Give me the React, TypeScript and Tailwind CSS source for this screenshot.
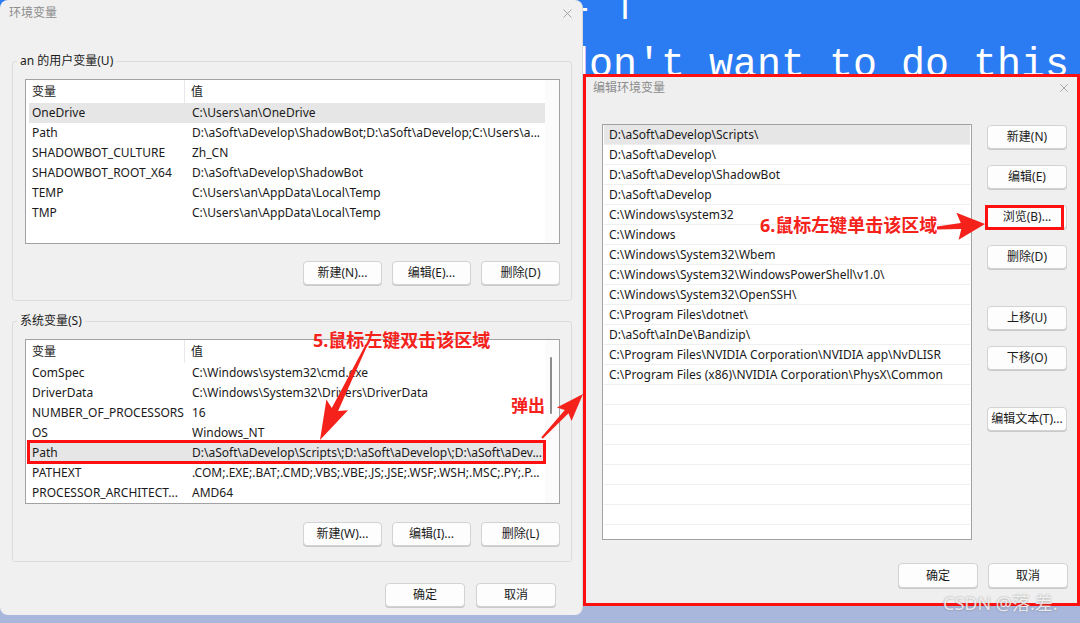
import { X } from "lucide-react";

type Row = [string, string];

const userVars: Row[] = [
  ["OneDrive", "C:\\Users\\an\\OneDrive"],
  ["Path", "D:\\aSoft\\aDevelop\\ShadowBot;D:\\aSoft\\aDevelop;C:\\Users\\a..."],
  ["SHADOWBOT_CULTURE", "Zh_CN"],
  ["SHADOWBOT_ROOT_X64", "D:\\aSoft\\aDevelop\\ShadowBot"],
  ["TEMP", "C:\\Users\\an\\AppData\\Local\\Temp"],
  ["TMP", "C:\\Users\\an\\AppData\\Local\\Temp"],
];

const sysVars: Row[] = [
  ["ComSpec", "C:\\Windows\\system32\\cmd.exe"],
  ["DriverData", "C:\\Windows\\System32\\Drivers\\DriverData"],
  ["NUMBER_OF_PROCESSORS", "16"],
  ["OS", "Windows_NT"],
  ["Path", "D:\\aSoft\\aDevelop\\Scripts\\;D:\\aSoft\\aDevelop\\;D:\\aSoft\\aDev..."],
  ["PATHEXT", ".COM;.EXE;.BAT;.CMD;.VBS;.VBE;.JS;.JSE;.WSF;.WSH;.MSC;.PY;.P..."],
  ["PROCESSOR_ARCHITECT...", "AMD64"],
];

const pathEntries = [
  "D:\\aSoft\\aDevelop\\Scripts\\",
  "D:\\aSoft\\aDevelop\\",
  "D:\\aSoft\\aDevelop\\ShadowBot",
  "D:\\aSoft\\aDevelop",
  "C:\\Windows\\system32",
  "C:\\Windows",
  "C:\\Windows\\System32\\Wbem",
  "C:\\Windows\\System32\\WindowsPowerShell\\v1.0\\",
  "C:\\Windows\\System32\\OpenSSH\\",
  "C:\\Program Files\\dotnet\\",
  "D:\\aSoft\\aInDe\\Bandizip\\",
  "C:\\Program Files\\NVIDIA Corporation\\NVIDIA app\\NvDLISR",
  "C:\\Program Files (x86)\\NVIDIA Corporation\\PhysX\\Common",
];

function Btn({ children, className = "" }: { children: React.ReactNode; className?: string }) {
  return (
    <button
      className={`flex h-[24px] w-[79px] items-center justify-center rounded-[4px] border border-[#d3d3d3] bg-[#fdfdfd] text-[12px] text-[#1b1b1b] shadow-[0_1px_0_#c9c9c9] ${className}`}
    >
      {children}
    </button>
  );
}

function VarList({ rows, selected, scroll }: { rows: Row[]; selected: number; scroll?: boolean }) {
  return (
    <div className="flex h-[165px] border border-[#a2a2a2] bg-white">
      <div className="min-w-0 flex-1">
        <div className="flex h-[23px]">
          <div className="flex w-[159px] items-center border-r border-[#e8e8e8] pl-[6px]">变量</div>
          <div className="flex items-center pl-[6px]">值</div>
        </div>
        {rows.map(([name, value], i) => (
          <div
            key={name + i}
            className={`ml-[3px] flex h-[20px] items-center ${i === selected ? "bg-[#e6e6e6]" : ""}`}
          >
            <div className="w-[156px] overflow-hidden whitespace-nowrap pl-[3px]">{name}</div>
            <div className="min-w-0 flex-1 overflow-hidden whitespace-nowrap pl-[7px]">{value}</div>
          </div>
        ))}
      </div>
      <div className="w-[14px] bg-[#fbfbfb]">
        {scroll && <div className="ml-[5px] mt-[17px] h-[57px] w-[2px] rounded-full bg-[#8d8d8d]" />}
      </div>
    </div>
  );
}

function Group({ title, children, className = "" }: { title: string; children: React.ReactNode; className?: string }) {
  return (
    <fieldset
      className={`ml-[12px] w-[560px] rounded-[3px] border border-[#dcdcdc] pb-[15px] pl-[12px] pr-[11px] pt-[10px] ${className}`}
    >
      <legend className="-ml-[8px] px-[3px] text-[12px] leading-[16px]">{title}</legend>
      {children}
    </fieldset>
  );
}

function arrow(x1: number, y1: number, x2: number, y2: number, headLen: number, headW: number, neckW: number, tailW: number) {
  const L = Math.hypot(x2 - x1, y2 - y1);
  const ux = (x2 - x1) / L;
  const uy = (y2 - y1) / L;
  const px = -uy;
  const py = ux;
  const nx = x2 - ux * headLen;
  const ny = y2 - uy * headLen;
  const bx = x2 - ux * headLen * 1.15;
  const by = y2 - uy * headLen * 1.15;
  const pts = [
    [x1 + (px * tailW) / 2, y1 + (py * tailW) / 2],
    [nx + (px * neckW) / 2, ny + (py * neckW) / 2],
    [bx + (px * headW) / 2, by + (py * headW) / 2],
    [x2, y2],
    [bx - (px * headW) / 2, by - (py * headW) / 2],
    [nx - (px * neckW) / 2, ny - (py * neckW) / 2],
    [x1 - (px * tailW) / 2, y1 - (py * tailW) / 2],
  ];
  return pts.map((p) => `${p[0].toFixed(1)},${p[1].toFixed(1)}`).join(" ");
}

export default function App() {
  return (
    <div className="relative h-[623px] w-[1080px] overflow-hidden font-['Noto_Sans','Noto_Sans_CJK_SC',sans-serif] text-[12px] text-[#1a1a1a]">
      {/* desktop behind */}
      <div className="flex h-full flex-col">
        <div className="h-[605px] bg-[#2b7cf2] pl-[565px] font-['Liberation_Mono',monospace] text-[40px] leading-[40px] whitespace-pre text-white">
          <div className="-mt-[19px]">E |</div>
          <div className="mt-[25px]">don't want to do this</div>
        </div>
        <div className="flex-1 bg-[#a9b7dc]" />
      </div>

      {/* 环境变量 window */}
      <div className="absolute left-0 top-0 flex h-[615px] w-[583px] flex-col rounded-[8px] border-r border-[#d9d9d9] bg-[#f0f0f0]">
        <div className="flex h-[26px] items-center justify-between pl-[9px] pr-[7px]">
          <span className="text-[12px] text-[#8c8c8c]">环境变量</span>
          <X size={15} strokeWidth={1.2} className="text-[#8c8c8c]" />
        </div>
        <Group title="an 的用户变量(U)" className="mt-[27px]">
          <VarList rows={userVars} selected={0} />
          <div className="mt-[17px] flex justify-end gap-[10px]">
            <Btn>新建(N)...</Btn>
            <Btn>编辑(E)...</Btn>
            <Btn>删除(D)</Btn>
          </div>
        </Group>
        <Group title="系统变量(S)" className="mt-[12px]">
          <VarList rows={sysVars} selected={4} scroll />
          <div className="mt-[18px] flex justify-end gap-[10px]">
            <Btn>新建(W)...</Btn>
            <Btn>编辑(I)...</Btn>
            <Btn>删除(L)</Btn>
          </div>
        </Group>
        <div className="mt-[21px] flex justify-end gap-[11px] pr-[26px]">
          <Btn className="w-[80px]">确定</Btn>
          <Btn className="w-[80px]">取消</Btn>
        </div>
      </div>

      {/* 编辑环境变量 window, framed in red */}
      <div className="absolute left-[583px] top-[74px] flex h-[532px] w-[497px] flex-col border-[3px] border-[#ff1010] bg-[#efefef]">
        <div className="flex h-[21px] items-center justify-between pl-[7px] pr-[6px]">
          <span className="text-[12px] text-[#8c8c8c]">编辑环境变量</span>
          <X size={14} strokeWidth={1.2} className="text-[#8c8c8c]" />
        </div>
        <div className="mt-[26px] flex pl-[16px]">
          <div className="h-[416px] w-[370px] overflow-hidden border border-[#a2a2a2] bg-white px-[1px]">
            {Array.from({ length: 21 }).map((_, i) => (
              <div
                key={i}
                className={`flex h-[20px] items-center border-b border-[#efefef] pl-[5px] whitespace-nowrap ${i === 0 ? "bg-[#e6e6e6]" : ""}`}
              >
                {pathEntries[i] ?? ""}
              </div>
            ))}
          </div>
          <div className="ml-[15px] mt-[1px] flex flex-col">
            <Btn className="w-[80px]">新建(N)</Btn>
            <Btn className="mt-[16px] w-[80px]">编辑(E)</Btn>
            <Btn className="mt-[16px] w-[80px]">浏览(B)...</Btn>
            <Btn className="mt-[16px] w-[80px]">删除(D)</Btn>
            <Btn className="mt-[37px] w-[80px]">上移(U)</Btn>
            <Btn className="mt-[16px] w-[80px]">下移(O)</Btn>
            <Btn className="mt-[37px] w-[80px]">编辑文本(T)...</Btn>
          </div>
        </div>
        <div className="mt-[23px] flex justify-end gap-[10px] pr-[9px]">
          <Btn className="h-[25px] w-[80px]">确定</Btn>
          <Btn className="h-[25px] w-[80px]">取消</Btn>
        </div>
      </div>

      {/* annotations */}
      <div className="absolute left-[27px] top-[440px] h-[24px] w-[519px] border-[3px] border-[#ff1010]" />
      <div className="absolute left-[985px] top-[205px] h-[25px] w-[79px] border-[3px] border-[#ff1010]" />
      <div className="absolute left-[313px] top-[328px] whitespace-nowrap text-[18px] font-bold leading-[24px] text-[#f5221b]">
        5.鼠标左键双击该区域
      </div>
      <div className="absolute left-[511px] top-[395px] whitespace-nowrap text-[17px] font-bold leading-[22px] text-[#f5221b]">
        弹出
      </div>
      <div className="absolute left-[760px] top-[213px] whitespace-nowrap text-[18px] font-bold leading-[24px] text-[#f5221b]">
        6.鼠标左键单击该区域
      </div>
      <svg className="pointer-events-none absolute left-0 top-0" width={1080} height={623}>
        <polygon points={arrow(366, 346, 320, 440, 34, 24, 7, 2)} fill="#f5221b" />
        <polygon points={arrow(542, 438, 583, 394, 24, 20, 5, 2)} fill="#f5221b" />
        <polygon points={arrow(937, 228, 985, 224, 24, 27, 6, 3)} fill="#f5221b" />
      </svg>
      <div className="absolute left-[943px] top-[591px] whitespace-nowrap text-[18px] leading-[24px] text-white/80 [text-shadow:0_0_2px_rgba(80,80,80,0.6)]">
        CSDN @落.差.
      </div>
    </div>
  );
}
